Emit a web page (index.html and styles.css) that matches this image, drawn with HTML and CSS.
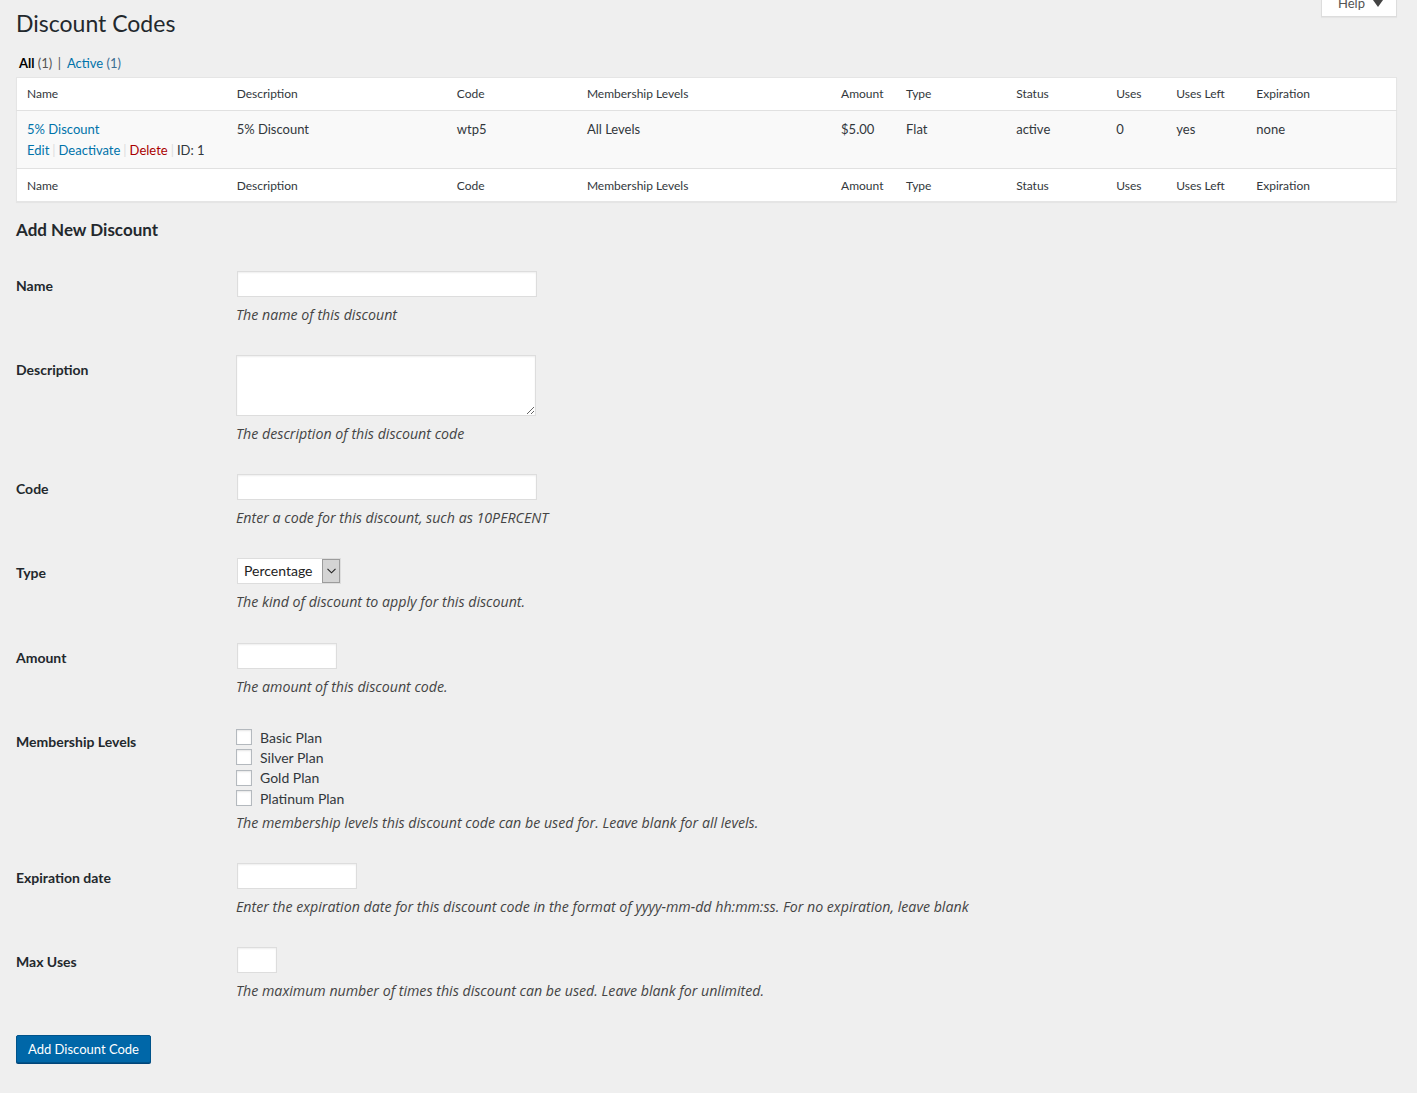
FILE: index.html
```html
<!DOCTYPE html>
<html>
<head>
<meta charset="utf-8">
<title>Discount Codes</title>
<link rel="stylesheet" href="styles.css">
</head>
<body>
<div class="wrap">
  <div class="help-tab">Help <svg class="help-arrow" width="10" height="7" viewBox="0 0 10 7"><path d="M0 0 H10 L5 7 Z" fill="#444"/></svg></div>
  <h1 class="page-title">Discount Codes</h1>
  <ul class="subsubsub">
    <li><span class="current">All</span> <span class="count">(1)</span> <span class="sep">|</span></li>
    <li><a class="link" href="#">Active <span class="count-link">(1)</span></a></li>
  </ul>

  <table class="list-table">
    <colgroup>
      <col class="c-name"><col class="c-desc"><col class="c-code"><col class="c-levels"><col class="c-amount"><col class="c-type"><col class="c-status"><col class="c-uses"><col class="c-left"><col class="c-exp">
    </colgroup>
    <thead>
      <tr><th>Name</th><th>Description</th><th>Code</th><th>Membership Levels</th><th>Amount</th><th>Type</th><th>Status</th><th>Uses</th><th>Uses Left</th><th>Expiration</th></tr>
    </thead>
    <tbody>
      <tr class="alt">
        <td>
          <a class="link" href="#">5% Discount</a>
          <div class="row-actions"><a class="link" href="#">Edit</a><span class="sep">|</span><a class="link" href="#">Deactivate</a><span class="sep">|</span><a class="link delete" href="#">Delete</a><span class="sep">|</span><span class="id">ID: 1</span></div>
        </td>
        <td>5% Discount</td><td>wtp5</td><td>All Levels</td><td>$5.00</td><td>Flat</td><td>active</td><td>0</td><td>yes</td><td>none</td>
      </tr>
    </tbody>
    <tfoot>
      <tr><th>Name</th><th>Description</th><th>Code</th><th>Membership Levels</th><th>Amount</th><th>Type</th><th>Status</th><th>Uses</th><th>Uses Left</th><th>Expiration</th></tr>
    </tfoot>
  </table>

  <h2 class="section-title">Add New Discount</h2>

  <div class="form-table">
    <div class="form-row">
      <div class="form-label">Name</div>
      <div class="form-field">
        <input class="text-input w-300" type="text">
        <p class="description">The name of this discount</p>
      </div>
    </div>
    <div class="form-row">
      <div class="form-label">Description</div>
      <div class="form-field">
        <textarea class="text-area"></textarea>
        <p class="description">The description of this discount code</p>
      </div>
    </div>
    <div class="form-row">
      <div class="form-label">Code</div>
      <div class="form-field">
        <input class="text-input w-300" type="text">
        <p class="description">Enter a code for this discount, such as 10PERCENT</p>
      </div>
    </div>
    <div class="form-row">
      <div class="form-label">Type</div>
      <div class="form-field field-type">
        <div class="fake-select"><span class="select-value">Percentage</span><span class="select-arrow"><svg width="9" height="6" viewBox="0 0 9 6"><path d="M0.5 0.8 L4.5 4.8 L8.5 0.8" fill="none" stroke="#222" stroke-width="1.1"/></svg></span></div>
        <p class="description">The kind of discount to apply for this discount.</p>
      </div>
    </div>
    <div class="form-row">
      <div class="form-label">Amount</div>
      <div class="form-field">
        <input class="text-input w-100" type="text">
        <p class="description">The amount of this discount code.</p>
      </div>
    </div>
    <div class="form-row">
      <div class="form-label">Membership Levels</div>
      <div class="form-field">
        <div class="checklist">
          <label class="check-row"><span class="checkbox"></span>Basic Plan</label>
          <label class="check-row"><span class="checkbox"></span>Silver Plan</label>
          <label class="check-row"><span class="checkbox"></span>Gold Plan</label>
          <label class="check-row"><span class="checkbox"></span>Platinum Plan</label>
        </div>
        <p class="description desc-check">The membership levels this discount code can be used for. Leave blank for all levels.</p>
      </div>
    </div>
    <div class="form-row">
      <div class="form-label">Expiration date</div>
      <div class="form-field">
        <input class="text-input w-120" type="text">
        <p class="description">Enter the expiration date for this discount code in the format of yyyy-mm-dd hh:mm:ss. For no expiration, leave blank</p>
      </div>
    </div>
    <div class="form-row">
      <div class="form-label">Max Uses</div>
      <div class="form-field">
        <input class="text-input w-40" type="text">
        <p class="description">The maximum number of times this discount can be used. Leave blank for unlimited.</p>
      </div>
    </div>
  </div>

  <div class="submit">
    <button class="button-primary" type="button">Add Discount Code</button>
  </div>
</div>
</body>
</html>
```

FILE: styles.css
```css
html, body {
  margin: 0;
  padding: 0;
}
body {
  background: #efefef;
  font-family: Lato, "Liberation Sans", sans-serif;
  font-size: 13px;
  color: #32373c;
  height: 1093px;
  overflow: hidden;
}
.wrap {
  padding: 0 20px 0 16px;
}
.help-tab {
  float: right;
  margin-top: -11px;
  height: 27px;
  line-height: 28px;
  width: 58px;
  padding: 0 0 0 16px;
  background: #fff;
  border: 1px solid #ddd;
  border-top: none;
  box-shadow: 0 1px 1px rgba(0,0,0,0.04);
  color: #555;
  font-size: 13px;
}
.help-arrow {
  margin-left: 5px;
  vertical-align: 1px;
}
.page-title {
  margin: 0;
  padding: 9px 0 0 0;
  font-size: 23px;
  line-height: 29px;
  font-weight: 400;
  color: #23282d;
}
.subsubsub {
  list-style: none;
  margin: 0;
  padding: 16px 0 5px 3px;
  display: flex;
  gap: 4px;
  line-height: 18px;
  font-size: 13px;
  color: #555;
}
.subsubsub .current {
  color: #000;
  font-weight: 700;
}
.subsubsub .sep {
  margin: 0 2px;
}
.count-link {
  color: #3b6d93;
}
.link {
  color: #0073aa;
  text-decoration: none;
}
.list-table {
  width: 100%;
  table-layout: fixed;
  border-collapse: collapse;
  background: #fff;
  border: 1px solid #e5e5e5;
  box-shadow: 0 1px 1px rgba(0,0,0,0.04);
}
.c-name { width: 210px; }
.c-desc { width: 220px; }
.c-code { width: 130px; }
.c-levels { width: 254px; }
.c-amount { width: 65px; }
.c-type { width: 110px; }
.c-status { width: 100px; }
.c-uses { width: 60px; }
.c-left { width: 80px; }
.c-exp { width: 150px; }
.list-table th {
  text-align: left;
  font-weight: 400;
  font-size: 12px;
  color: #32373c;
  line-height: 16px;
  white-space: nowrap;
}
.list-table thead th {
  padding: 8px 10px 8px 10px;
  border-bottom: 1px solid #e1e1e1;
}
.list-table tfoot th {
  padding: 9px 10px 7px 10px;
  border-top: 1px solid #e1e1e1;
}
.list-table td {
  vertical-align: top;
  padding: 9px 10px;
  line-height: 18px;
  font-size: 13px;
  color: #32373c;
}
.list-table tr.alt td {
  background: #f9f9f9;
}
.row-actions {
  margin-top: 3px;
  white-space: nowrap;
}
.row-actions .sep {
  color: #ddd;
  margin: 0 3px;
}
.row-actions .delete {
  color: #a00;
}
.row-actions .id {
  color: #32373c;
}
.section-title {
  margin: 17px 0 0 0;
  font-size: 17px;
  line-height: 22px;
  font-weight: 700;
  color: #23282d;
}
.form-table {
  margin-top: 15px;
}
.form-row {
  display: grid;
  grid-template-columns: 210px 1fr;
}
.form-label {
  padding: 20px 10px 20px 0;
  font-size: 14px;
  line-height: 19px;
  font-weight: 700;
  color: #23282d;
}
.form-field {
  padding: 15px 10px 16px 10px;
}
.field-type {
  padding-bottom: 17px;
}
.text-input {
  display: block;
  box-sizing: border-box;
  height: 26px;
  margin: 0 0 0 1px;
  padding: 3px 5px;
  border: 1px solid #ddd;
  background: #fff;
  box-shadow: inset 0 1px 2px rgba(0,0,0,0.07);
  font-family: inherit;
  font-size: 14px;
  outline: none;
}
.w-300 { width: 300px; }
.w-100 { width: 100px; }
.w-120 { width: 120px; }
.w-40 { width: 40px; }
.text-area {
  display: block;
  box-sizing: border-box;
  width: 300px;
  height: 61px;
  margin: 0;
  border: 1px solid #ddd;
  background: #fff;
  box-shadow: inset 0 1px 2px rgba(0,0,0,0.07);
  font-family: inherit;
  font-size: 14px;
  outline: none;
}
.description {
  margin: 8px 0 0 0;
  font-family: "Open Sans", Lato, sans-serif;
  font-size: 14.2px;
  line-height: 19px;
  font-style: italic;
  color: #444;
  white-space: nowrap;
}
.desc-check {
  margin-top: 5px;
}
.fake-select {
  box-sizing: border-box;
  width: 104px;
  height: 26px;
  margin-left: 1px;
  display: flex;
  align-items: stretch;
  background: #fff;
  border: 1px solid #ddd;
}
.select-value {
  flex: 1;
  padding-left: 6px;
  line-height: 24px;
  font-size: 14px;
  color: #222;
}
.select-arrow {
  width: 16px;
  display: flex;
  align-items: center;
  justify-content: center;
  background: #d4d4d4;
  border: 1px solid #9c9c9c;
  margin: 0;
}
.checklist {
  display: flex;
  flex-direction: column;
}
.check-row {
  display: flex;
  align-items: center;
  height: 20.3px;
  font-size: 14px;
  color: #32373c;
}
.checkbox {
  box-sizing: border-box;
  width: 16px;
  height: 16px;
  border: 1px solid #b4b9be;
  background: #fff;
  box-shadow: inset 0 1px 2px rgba(0,0,0,0.1);
  margin-right: 8px;
}
.submit {
  padding: 19px 0 0 0;
}
.button-primary {
  box-sizing: border-box;
  height: 28px;
  padding: 0 11px;
  background: #0067a8;
  border: 1px solid #00538a;
  border-radius: 2px;
  box-shadow: 0 1px 0 #00457a;
  color: #fff;
  font-family: inherit;
  font-size: 13px;
  line-height: 26px;
  cursor: pointer;
}
```
